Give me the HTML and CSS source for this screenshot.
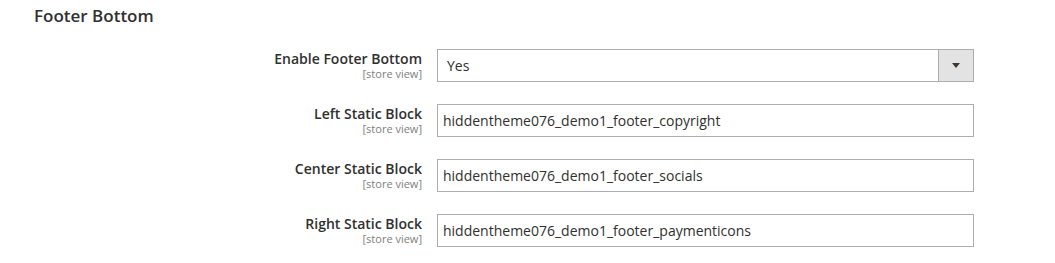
FILE: index.html
```html
<!DOCTYPE html>
<html lang="en">
<head>
  <meta charset="UTF-8">
  <title>Footer Bottom</title>
  <link rel="stylesheet" href="styles.css">
</head>
<body>
  <div class="section">
    <h2 class="section-title">Footer Bottom</h2>

    <div class="field-list">
      <div class="field">
        <div class="label">
          <span>Enable Footer Bottom</span>
          <span class="scope">[store view]</span>
        </div>
        <div class="control">
          <div class="select">
            <span>Yes</span>
            <span class="select-btn"><span class="arrow"></span></span>
          </div>
        </div>
      </div>

      <div class="field">
        <div class="label">
          <span>Left Static Block</span>
          <span class="scope">[store view]</span>
        </div>
        <div class="control">
          <input type="text" value="hiddentheme076_demo1_footer_copyright">
        </div>
      </div>

      <div class="field">
        <div class="label">
          <span>Center Static Block</span>
          <span class="scope">[store view]</span>
        </div>
        <div class="control">
          <input type="text" value="hiddentheme076_demo1_footer_socials">
        </div>
      </div>

      <div class="field">
        <div class="label">
          <span>Right Static Block</span>
          <span class="scope">[store view]</span>
        </div>
        <div class="control">
          <input type="text" value="hiddentheme076_demo1_footer_paymenticons">
        </div>
      </div>
    </div>
  </div>
</body>
</html>
```

FILE: styles.css
```css
body {
  margin: 0;
  font-family: "Open Sans", sans-serif;
  background: #fff;
  color: #303030;
}

.section {
  padding: 4px 0 0 34px;
}

.section-title {
  margin: 0;
  font-size: 17px;
  font-weight: 600;
  line-height: 24px;
  color: #303030;
}

.field-list {
  margin-top: 21px;
}

.field {
  display: grid;
  grid-template-columns: 388px 537px;
  column-gap: 15px;
  margin-bottom: 22px;
}

.label {
  display: flex;
  flex-direction: column;
  align-items: flex-end;
  padding-top: 1px;
  font-size: 14px;
  font-weight: 600;
  line-height: 18px;
}

.scope {
  font-size: 11px;
  font-weight: 400;
  color: #808080;
  line-height: 12px;
}

.control input,
.select {
  box-sizing: border-box;
  width: 537px;
  height: 33px;
  border: 1px solid #adadad;
  font-family: "Open Sans", sans-serif;
  font-size: 14px;
  color: #303030;
  background: #fff;
}

.control input {
  display: block;
  padding: 0 5px;
}

.select {
  display: flex;
  align-items: center;
  justify-content: space-between;
  padding-left: 9px;
}

.select-btn {
  width: 35px;
  height: 31px;
  box-sizing: border-box;
  border-left: 1px solid #adadad;
  background: #e3e3e3;
  display: flex;
  align-items: center;
  justify-content: center;
}

.arrow {
  width: 0;
  height: 0;
  border-left: 4px solid transparent;
  border-right: 4px solid transparent;
  border-top: 5px solid #41362f;
}
```
